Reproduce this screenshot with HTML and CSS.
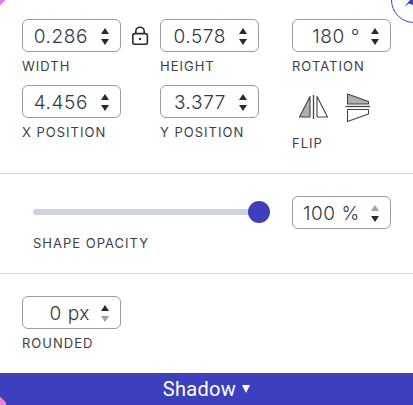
FILE: index.html
```html
<!DOCTYPE html>
<html lang="en">
<head>
    <meta charset="UTF-8">
    <title>Shape Settings</title>
    <link rel="stylesheet" href="styles.css">
</head>
<body>
    <div class="corner-top"></div>
    <div class="corner-bottom"></div>
    <svg class="close-circle" width="22" height="24" viewBox="0 0 22 24">
        <circle cx="23" cy="0" r="22.5" fill="#fff" stroke="#3d3fbd"/>
        <path d="M13.5 6.5 L19 0 H22 V5 L18 3.5 Z" fill="#3d3fbd"/>
    </svg>

    <div class="panel">
        <section class="section-size">
            <div class="size-grid">
                <div class="field">
                    <div class="number-box"><span class="value">0.286</span><span class="spin"><i class="up"></i><i class="down"></i></span></div>
                    <div class="caption">WIDTH</div>
                </div>
                <div class="lock">
                    <svg width="18" height="20" viewBox="0 0 18 20" fill="none" stroke="#2b2b2b" stroke-width="1.6">
                        <rect x="1.8" y="7.6" width="14.6" height="10.6" rx="2"/>
                        <path d="M4.8 7.4 V5.4 a4.2 4.2 0 0 1 8.4 0 V7.4"/>
                        <circle cx="9" cy="13" r="1.2" fill="#2b2b2b" stroke="none"/>
                    </svg>
                </div>
                <div class="field">
                    <div class="number-box"><span class="value">0.578</span><span class="spin"><i class="up"></i><i class="down"></i></span></div>
                    <div class="caption">HEIGHT</div>
                </div>
                <div></div>
                <div class="field">
                    <div class="number-box"><span class="value unit">180 °</span><span class="spin"><i class="up"></i><i class="down"></i></span></div>
                    <div class="caption">ROTATION</div>
                </div>

                <div class="field">
                    <div class="number-box"><span class="value">4.456</span><span class="spin"><i class="up"></i><i class="down"></i></span></div>
                    <div class="caption">X POSITION</div>
                </div>
                <div></div>
                <div class="field">
                    <div class="number-box"><span class="value">3.377</span><span class="spin"><i class="up"></i><i class="down"></i></span></div>
                    <div class="caption">Y POSITION</div>
                </div>
                <div></div>
                <div class="flip">
                    <div class="flip-icons">
                        <svg width="32" height="28" viewBox="0 0 32 28" stroke="#444" stroke-width="1.1" stroke-linejoin="round">
                            <path d="M1.5 23 L12 2.5 V23 Z" fill="#b0b0b0"/>
                            <path d="M15.5 1 V25" fill="none" stroke-width="1.3"/>
                            <path d="M19 2.5 L29.5 23 H19 Z" fill="#fff"/>
                        </svg>
                        <svg class="flip-vertical" width="26" height="30" viewBox="0 0 26 30" stroke="#444" stroke-width="1.1" stroke-linejoin="round">
                            <path d="M2.5 1 L23.5 8.5 V11 H2.5 Z" fill="#b0b0b0"/>
                            <path d="M0.5 13.5 H25" fill="none" stroke-width="1.3"/>
                            <path d="M2.5 16.5 H23.5 V21 L2.5 28.5 Z" fill="#fff"/>
                        </svg>
                    </div>
                    <div class="caption">FLIP</div>
                </div>
            </div>
        </section>

        <section class="section-opacity">
            <div class="slider-col">
                <div class="slider">
                    <div class="slider-track"></div>
                    <div class="slider-thumb"></div>
                </div>
                <div class="caption">SHAPE OPACITY</div>
            </div>
            <div class="number-box"><span class="value unit">100 %</span><span class="spin"><i class="up off"></i><i class="down"></i></span></div>
        </section>

        <section class="section-rounded">
            <div class="field">
                <div class="number-box"><span class="value unit">0 px</span><span class="spin"><i class="up"></i><i class="down off"></i></span></div>
                <div class="caption">ROUNDED</div>
            </div>
        </section>

        <div class="shadow-bar">Shadow <span class="caret"></span></div>
    </div>
</body>
</html>
```

FILE: styles.css
```css
body {
    margin: 0;
    width: 413px;
    height: 405px;
    overflow: hidden;
    background-color: #fff;
    font-family: Roboto, Arial, sans-serif;
    color: #33373f;
    position: relative;
}

.panel {
    display: flex;
    flex-direction: column;
    height: 405px;
}

.section-size {
    height: 174px;
    padding: 19px 0 0 22px;
    box-sizing: border-box;
    border-bottom: 1px solid #d6d6d6;
}

.size-grid {
    display: grid;
    grid-template-columns: 99px 39px 99px 33px 99px;
    grid-auto-rows: 66px;
}

.section-opacity {
    height: 100px;
    box-sizing: border-box;
    padding: 22px 0 0 33px;
    border-bottom: 1px solid #d6d6d6;
    display: flex;
    gap: 32px;
    align-items: flex-start;
}

.section-rounded {
    height: 99px;
    box-sizing: border-box;
    padding: 22px 0 0 22px;
}

.number-box {
    width: 99px;
    height: 33px;
    box-sizing: border-box;
    border: 1px solid #9c9c9c;
    border-radius: 6px;
    display: flex;
    align-items: center;
    justify-content: flex-end;
    padding: 1px 11px 0 0;
    background-color: #fff;
    flex-shrink: 0;
}

.value {
    font-family: Inter, Roboto, sans-serif;
    font-size: 19px;
    font-weight: 300;
    letter-spacing: 0.6px;
    color: #2f3a4a;
    margin-right: 13px;
}

.value.unit {
    margin-right: 11px;
}

.spin {
    display: flex;
    flex-direction: column;
    gap: 5px;
}

.spin i {
    display: block;
    width: 0;
    height: 0;
    border-left: 4.5px solid transparent;
    border-right: 4.5px solid transparent;
}

.spin .up {
    border-bottom: 6px solid #2a2a2a;
}

.spin .down {
    border-top: 6px solid #2a2a2a;
}

.spin .up.off {
    border-bottom-color: #a3a3a3;
}

.spin .down.off {
    border-top-color: #a3a3a3;
}

.caption {
    font-family: Inter, Roboto, sans-serif;
    font-size: 13px;
    line-height: 14px;
    letter-spacing: 1px;
    color: #3b3f4a;
    margin-top: 7px;
}

.lock {
    display: flex;
    justify-content: center;
    padding-top: 7px;
    padding-right: 1px;
}

.flip {
    margin-left: 6px;
    margin-top: 9px;
}

.flip-icons {
    display: flex;
    gap: 15px;
    height: 36px;
}

.flip-vertical {
    margin-top: -1px;
}

.flip .caption {
    margin-top: 6px;
    margin-left: -6px;
}

.slider-col {
    width: 227px;
}

.slider {
    position: relative;
    height: 33px;
}

.slider-track {
    position: absolute;
    left: 0;
    right: 0;
    top: 13px;
    height: 6px;
    border-radius: 3px;
    background-color: #cdd3dd;
}

.slider-thumb {
    position: absolute;
    right: -10px;
    top: 5px;
    width: 22px;
    height: 22px;
    border-radius: 50%;
    background-color: #3d3fbd;
}

.shadow-bar {
    height: 32px;
    background-color: #3d3fbd;
    color: #fff;
    font-size: 20px;
    letter-spacing: 0.3px;
    display: flex;
    align-items: center;
    justify-content: center;
    gap: 6px;
}

.caret {
    width: 0;
    height: 0;
    border-left: 4.5px solid transparent;
    border-right: 4.5px solid transparent;
    border-top: 8px solid #fff;
}

.corner-top {
    position: absolute;
    left: 0;
    top: 0;
    width: 6px;
    height: 6px;
    background: linear-gradient(135deg, #e879e0 50%, transparent 50%);
}

.corner-bottom {
    position: absolute;
    left: 0;
    bottom: 0;
    width: 6px;
    height: 10px;
    background: linear-gradient(45deg, #ea7fd8 50%, transparent 50%);
    z-index: 2;
}

.close-circle {
    position: absolute;
    right: 0;
    top: 0;
}
```
